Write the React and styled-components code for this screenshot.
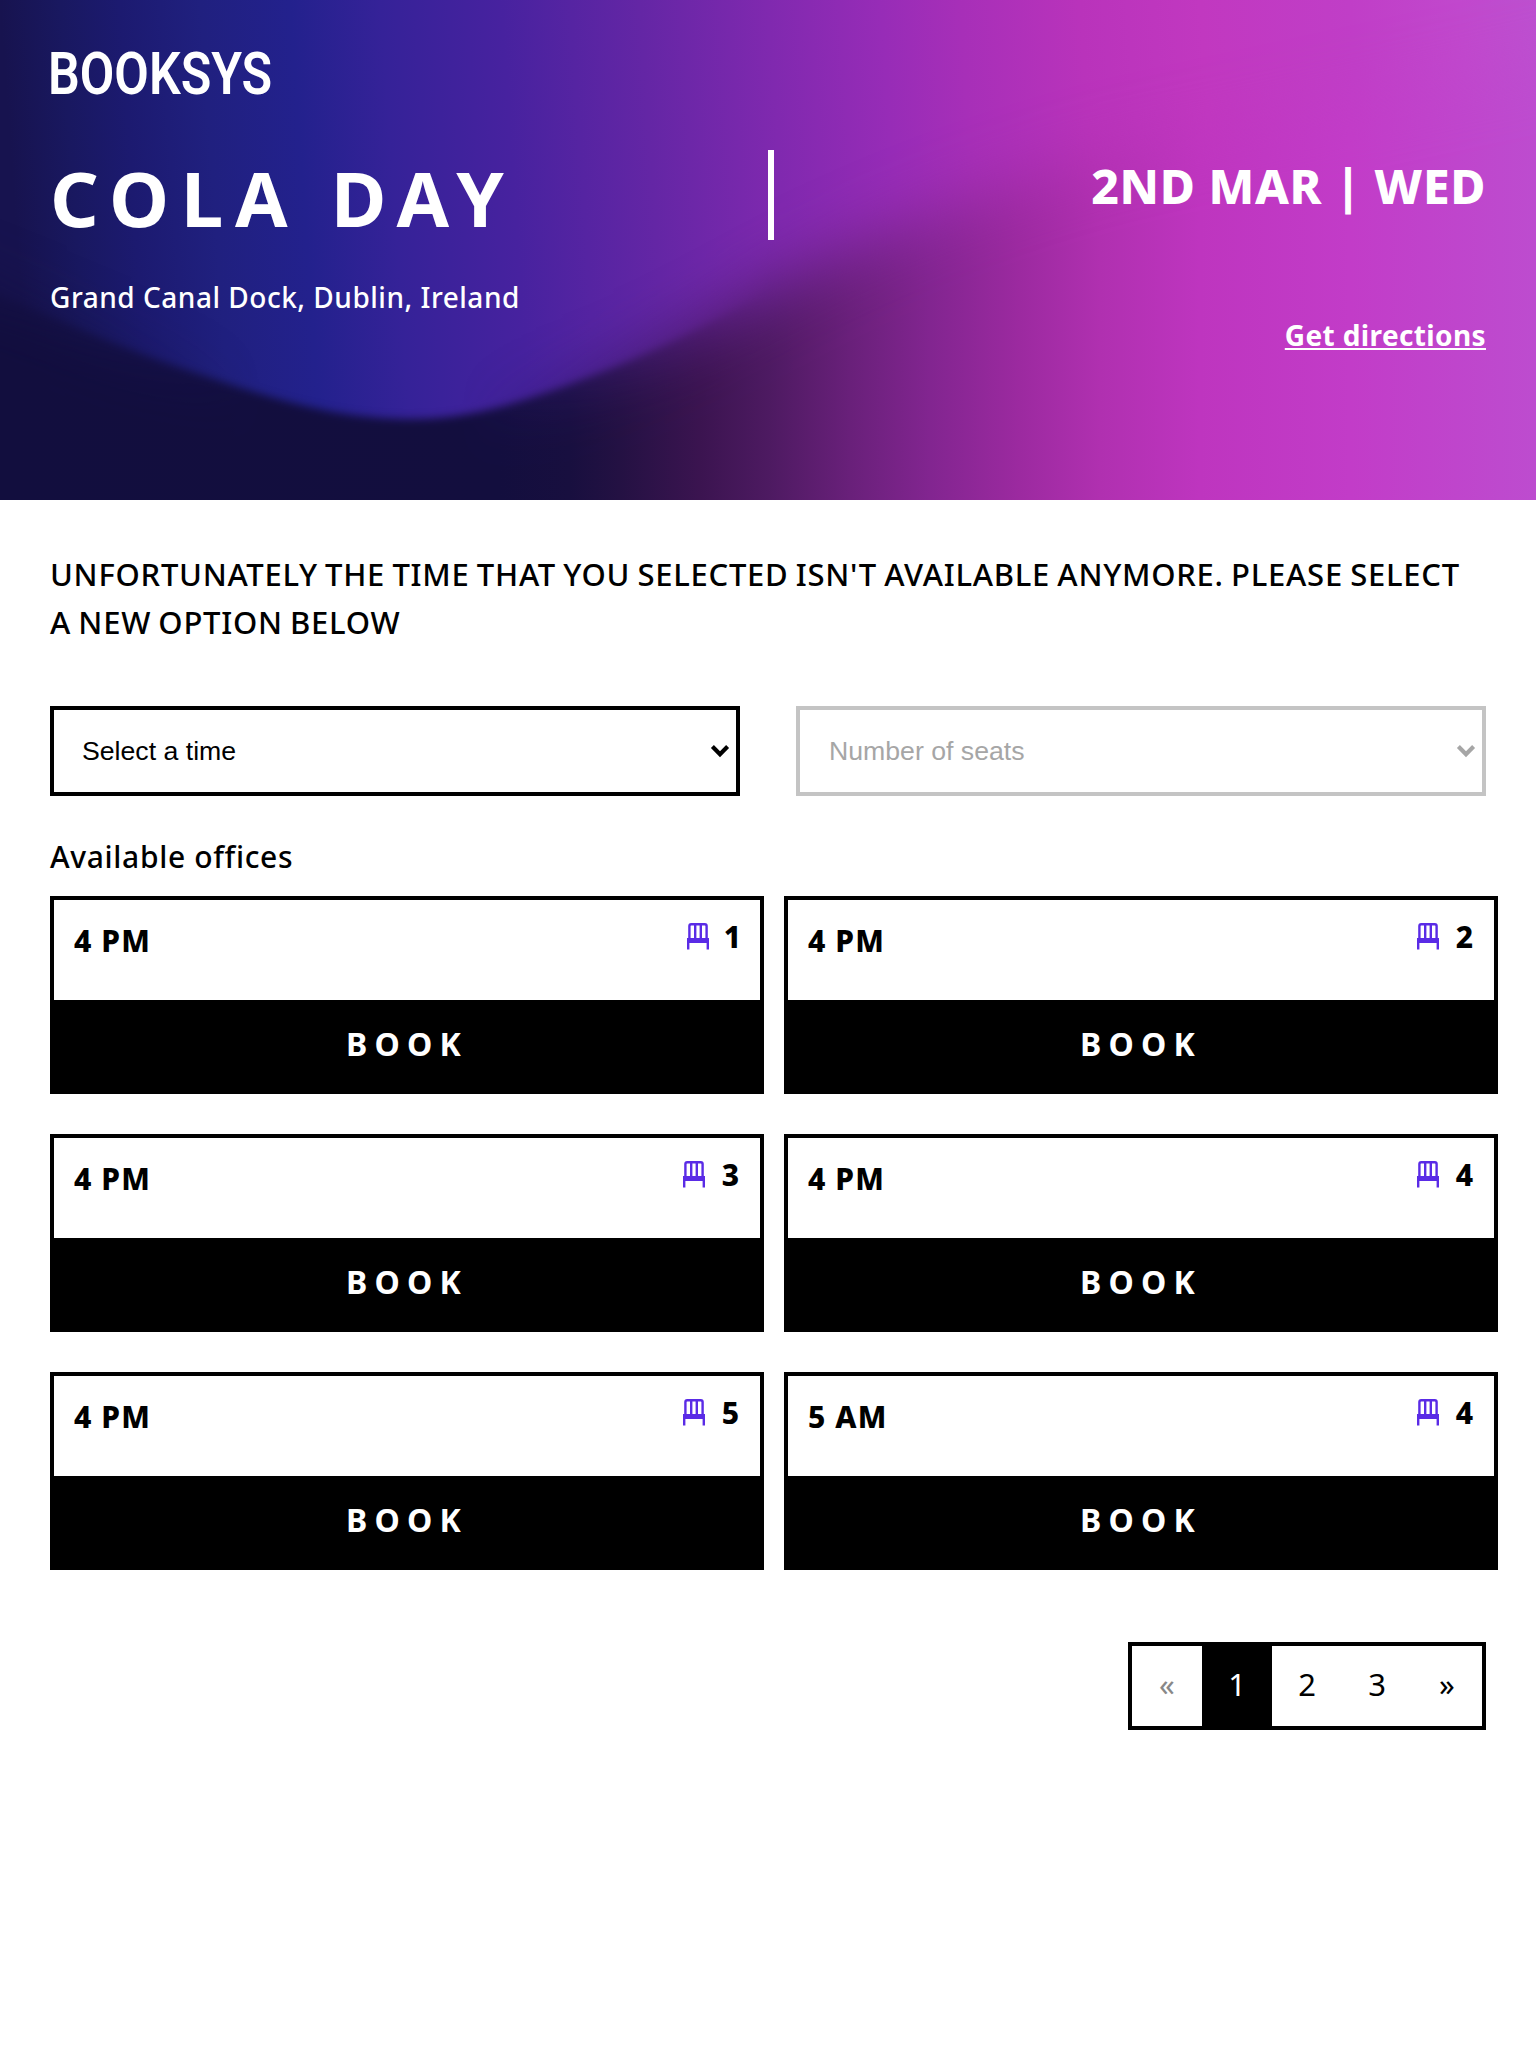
import React from "react";
import styled, { createGlobalStyle } from "styled-components";

const GlobalStyle = createGlobalStyle`
  * { box-sizing: border-box; }
  body {
    margin: 0;
    background: #fff;
    color: #000;
    font-family: "Noto Sans", "Open Sans", sans-serif;
  }
`;

const Page = styled.div`
  min-height: 2048px;
`;

const Header = styled.header`
  position: relative;
  height: 500px;
  padding: 44px 50px 0;
  color: #fff;
  overflow: hidden;
`;

const Artwork = styled.svg`
  position: absolute;
  inset: 0;
  width: 100%;
  height: 100%;
`;

const HeaderContent = styled.div`
  position: relative;
`;

const Logo = styled.div`
  font-family: Roboto, sans-serif;
  font-size: 60px;
  font-weight: 600;
  line-height: 60px;
  width: max-content;
  transform: scaleX(0.835);
  transform-origin: left center;
  margin-left: -2px;
`;

const EventRow = styled.div`
  display: flex;
  align-items: flex-start;
  margin-top: 46px;
`;

const EventInfo = styled.div`
  width: 718px;
`;

const Title = styled.h1`
  margin: 0;
  padding-top: 1px;
  font-size: 76px;
  font-weight: 700;
  line-height: 93px;
  letter-spacing: 11.7px;
`;

const Address = styled.p`
  margin: 32px 0 0;
  font-size: 28px;
  font-weight: 500;
  line-height: 42px;
  letter-spacing: 0.52px;
`;

const Divider = styled.div`
  width: 6px;
  height: 90px;
  background: #fff;
`;

const EventDate = styled.div`
  flex: 1;
  display: flex;
  flex-direction: column;
  align-items: flex-end;
`;

const DateText = styled.h2`
  margin: 0;
  padding-top: 1px;
  font-size: 48px;
  font-weight: 800;
  line-height: 70px;
  letter-spacing: 0.6px;
`;

const Directions = styled.a`
  margin-top: 93px;
  font-size: 28px;
  font-weight: 700;
  line-height: 42px;
  letter-spacing: 0.38px;
  color: #fff;
  text-decoration: underline;
  text-decoration-thickness: 2px;
  text-underline-offset: 2px;
  text-decoration-skip-ink: none;
`;

const Main = styled.main`
  padding: 50px 50px 0;
`;

const Notice = styled.p`
  margin: 0;
  font-size: 31px;
  font-weight: 500;
  line-height: 48px;
  letter-spacing: 0.74px;
  word-spacing: -1.5px;
`;

const Filters = styled.div`
  display: grid;
  grid-template-columns: 1fr 1fr;
  column-gap: 56px;
  margin-top: 60px;
`;

const SelectBox = styled.div`
  display: flex;
  align-items: center;
  justify-content: space-between;
  height: 90px;
  padding: 0 6px 0 ${(p) => (p.$disabled ? "29px" : "28px")};
  border: 4px solid ${(p) => (p.$disabled ? "#c4c4c4" : "#000")};
  color: ${(p) => (p.$disabled ? "#a6a6a6" : "#000")};
  font-family: "Liberation Sans", Arial, sans-serif;
  font-size: 26.67px;
  line-height: 82px;
`;

const SectionTitle = styled.h3`
  margin: 39px 0 17px;
  font-size: 30px;
  font-weight: 500;
  line-height: 44px;
  letter-spacing: 0.65px;
`;

const Offices = styled.div`
  display: grid;
  grid-template-columns: 714px 714px;
  gap: 40px 20px;
`;

const Card = styled.article`
  height: 198px;
  border: 4px solid #000;
  background: #fff;
`;

const CardInfo = styled.div`
  display: flex;
  justify-content: space-between;
  align-items: flex-start;
  height: 100px;
  padding: 16px 21px 0 20px;
  font-size: 30px;
  font-weight: 800;
  line-height: 40px;
`;

const Time = styled.span`
  padding-top: 5px;
  letter-spacing: 1.1px;
`;

const Seats = styled.span`
  display: flex;
  align-items: flex-start;
`;

const SeatCount = styled.span`
  padding-top: 1px;
  margin-left: ${(p) => (p.$narrow ? "14px" : "16px")};
  margin-right: ${(p) => (p.$narrow ? "-2px" : "0")};
`;

const ChairSvg = styled.svg`
  width: 24px;
  height: 28px;
  margin-top: 6px;
`;

const BookButton = styled.button`
  display: block;
  width: 100%;
  height: 90px;
  padding: 0 0 2px;
  border: 0;
  background: #000;
  color: #fff;
  font-family: inherit;
  font-size: 32px;
  font-weight: 700;
  line-height: 88px;
  letter-spacing: 7.2px;
`;

const PaginationRow = styled.div`
  display: flex;
  justify-content: flex-end;
  margin-top: 72px;
`;

const Pagination = styled.nav`
  display: flex;
  height: 88px;
  border: 4px solid #000;
`;

const PageLink = styled.span`
  width: 70px;
  text-align: center;
  font-size: 31px;
  font-weight: 400;
  line-height: 77px;
  background: ${(p) => (p.$active ? "#000" : "transparent")};
  color: ${(p) => (p.$active ? "#fff" : p.$disabled ? "#888" : "#000")};
`;

const topStops = [
  [0, "#17134f"], [60, "#191860"], [120, "#1c1a70"], [200, "#20207f"], [290, "#23218d"],
  [380, "#352298"], [500, "#47229f"], [640, "#6426a5"], [768, "#8029af"], [880, "#972cb7"],
  [960, "#a72fb8"], [1080, "#b933bb"], [1200, "#c138c0"], [1350, "#c03ec7"], [1460, "#c148cd"],
  [1536, "#bd50d0"],
];

const lowStops = [
  [0, "#120e3e"], [500, "#130e3e"], [570, "#180f3f"], [620, "#241143"], [700, "#3b1450"],
  [768, "#4d1a61"], [850, "#69207a"], [930, "#822590"], [1020, "#9c2aa0"], [1100, "#b030b0"],
  [1200, "#be35bf"], [1350, "#c23cc8"], [1536, "#bd4ccf"],
];

const Stops = ({ list }) =>
  list.map(([x, c]) => <stop key={x} offset={x / 1536} stopColor={c} />);

const wave =
  "M-120 250 L0 296 C80 329 130 352 205 376 C290 405 345 419 412 419 C480 419 540 396 610 369 C700 334 770 287 850 251 C930 215 1000 187 1120 155 L1700 30 V700 H-120 Z";

function HeaderArtwork() {
  return (
    <Artwork viewBox="0 0 1536 500" preserveAspectRatio="none" aria-hidden="true">
      <defs>
        <linearGradient id="top" gradientUnits="userSpaceOnUse" x1="0" y1="0" x2="1536" y2="0" gradientTransform="skewX(4)">
          <Stops list={topStops} />
        </linearGradient>
        <linearGradient id="low" gradientUnits="userSpaceOnUse" x1="0" y1="0" x2="1536" y2="0">
          <Stops list={lowStops} />
        </linearGradient>
        <linearGradient id="focus" gradientUnits="userSpaceOnUse" x1="0" y1="0" x2="1536" y2="0">
          <stop offset="0" stopColor="#555" />
          <stop offset="0.17" stopColor="#fff" />
          <stop offset="0.3" stopColor="#fff" />
          <stop offset="0.5" stopColor="#000" />
        </linearGradient>
        <filter id="crisp" x="-20%" y="-20%" width="140%" height="140%"><feGaussianBlur stdDeviation="4" /></filter>
        <filter id="soft" x="-20%" y="-20%" width="140%" height="140%"><feGaussianBlur stdDeviation="32" /></filter>
        <mask id="focusMask" maskUnits="userSpaceOnUse" x="0" y="0" width="1536" height="500">
          <rect width="1536" height="500" fill="url(#focus)" />
        </mask>
        <mask id="waveMask" maskUnits="userSpaceOnUse" x="0" y="0" width="1536" height="500">
          <path d={wave} fill="#fff" filter="url(#soft)" />
          <g mask="url(#focusMask)">
            <rect width="1536" height="500" fill="#000" />
            <path d={wave} fill="#fff" filter="url(#crisp)" />
          </g>
        </mask>
      </defs>
      <rect width="1536" height="500" fill="url(#top)" />
      <rect width="1536" height="500" fill="url(#low)" mask="url(#waveMask)" />
    </Artwork>
  );
}

const Chair = () => (
  <ChairSvg viewBox="0 0 24 28" fill="none" stroke="#5a2be6" strokeWidth="2.4" aria-hidden="true">
    <path d="M3.4 17V4Q3.4 2.2 5.2 2.2H18.8Q20.6 2.2 20.6 4V17" />
    <path d="M9.2 2V17M14.8 2V17" />
    <path d="M1 16H23V21H1Z" fill="#5a2be6" stroke="none" />
    <path d="M2.2 17V27.5M21.8 17V27.5" />
  </ChairSvg>
);

const Arrow = () => (
  <svg width="20" height="14" viewBox="0 0 20 14" fill="none" stroke="currentColor" strokeWidth="4.2" aria-hidden="true">
    <path d="M2.4 2.6L10 10.2L17.6 2.6" />
  </svg>
);

const offices = [
  ["4 PM", 1], ["4 PM", 2], ["4 PM", 3], ["4 PM", 4], ["4 PM", 5], ["5 AM", 4],
];

export default function App() {
  return (
    <Page>
      <GlobalStyle />
      <Header>
        <HeaderArtwork />
        <HeaderContent>
          <Logo>BOOKSYS</Logo>
          <EventRow>
            <EventInfo>
              <Title>COLA DAY</Title>
              <Address>Grand Canal Dock, Dublin, Ireland</Address>
            </EventInfo>
            <Divider />
            <EventDate>
              <DateText>2ND MAR | WED</DateText>
              <Directions href="#">Get directions</Directions>
            </EventDate>
          </EventRow>
        </HeaderContent>
      </Header>
      <Main>
        <Notice>
          UNFORTUNATELY THE TIME THAT YOU SELECTED ISN'T AVAILABLE ANYMORE. PLEASE SELECT A NEW OPTION BELOW
        </Notice>
        <Filters>
          <SelectBox>Select a time<Arrow /></SelectBox>
          <SelectBox $disabled>Number of seats<Arrow /></SelectBox>
        </Filters>
        <SectionTitle>Available offices</SectionTitle>
        <Offices>
          {offices.map(([time, seats], i) => (
            <Card key={i}>
              <CardInfo>
                <Time>{time}</Time>
                <Seats>
                  <Chair />
                  <SeatCount $narrow={seats === 1}>{seats}</SeatCount>
                </Seats>
              </CardInfo>
              <BookButton>BOOK</BookButton>
            </Card>
          ))}
        </Offices>
        <PaginationRow>
          <Pagination>
            <PageLink $disabled>«</PageLink>
            <PageLink $active>1</PageLink>
            <PageLink>2</PageLink>
            <PageLink>3</PageLink>
            <PageLink>»</PageLink>
          </Pagination>
        </PaginationRow>
      </Main>
    </Page>
  );
}
